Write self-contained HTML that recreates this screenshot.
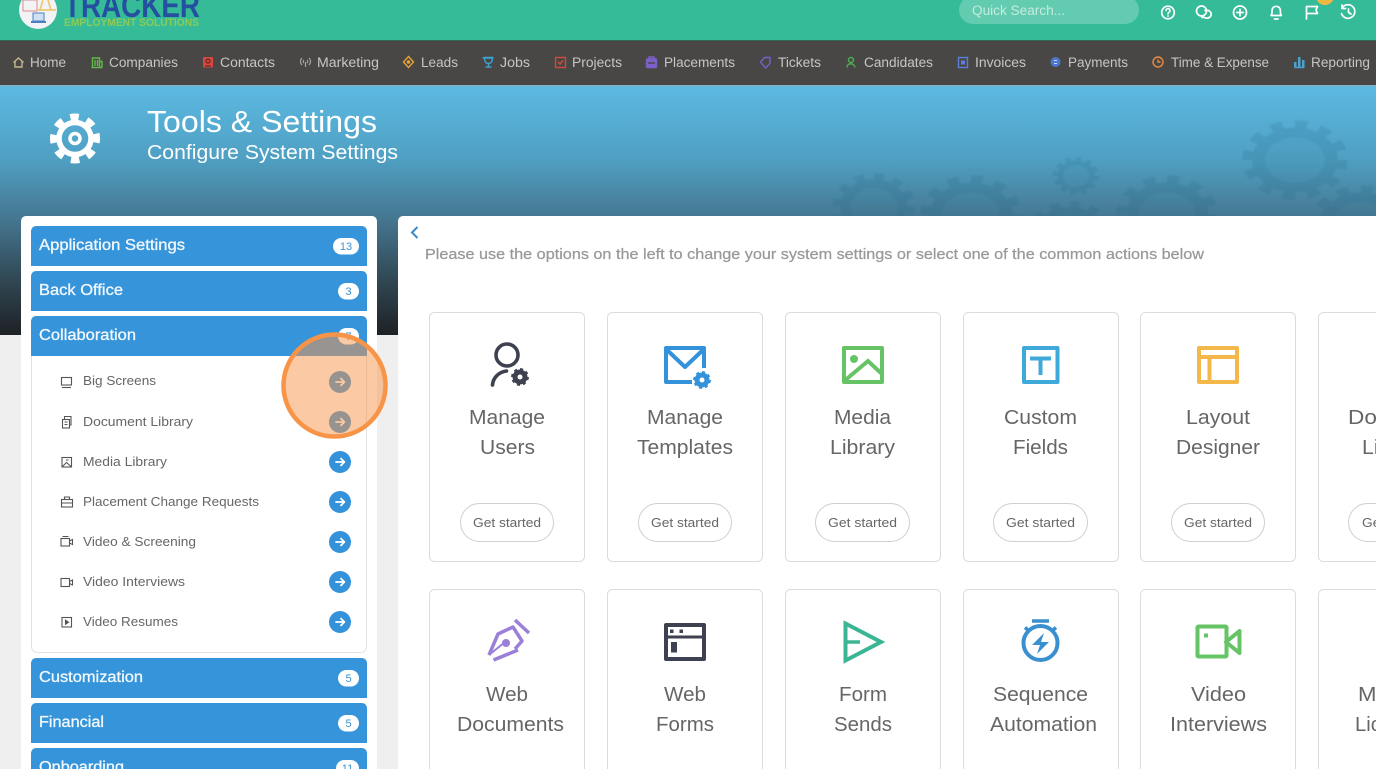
<!DOCTYPE html>
<html lang="en"><head><meta charset="utf-8"><title>Tools &amp; Settings</title>
<style>
html,body{margin:0;padding:0;width:1376px;height:769px;overflow:hidden;background:#efefef}
svg{display:block;position:absolute;left:0;top:0}
text{font-family:"Liberation Sans",sans-serif}
.nav{font-size:13.5px;fill:#c8c6c4}
.acc{font-size:15.5px;fill:#f2f8fd;stroke:#f2f8fd;stroke-width:.3}
.bd{font-size:11px;fill:#3f90cf;text-anchor:middle}
.li{font-size:13px;fill:#666}
.t{font-size:20.5px;fill:#666}
.b{font-size:13px;fill:#666}
.ni{fill:none;stroke-width:1.4}
.w{fill:none;stroke:#fff;stroke-width:1.7;stroke-linecap:round;stroke-linejoin:round}
</style></head><body>
<svg width="1376" height="769" viewBox="0 0 1376 769" xmlns="http://www.w3.org/2000/svg">
<defs>
<linearGradient id="hg" x1="0" y1="0" x2="0" y2="1"><stop offset="0" stop-color="#5cbae2"/><stop offset=".3" stop-color="#4f9fc2"/><stop offset=".55" stop-color="#44748d"/><stop offset=".8" stop-color="#2f444f"/><stop offset="1" stop-color="#1e2125"/></linearGradient>
<g id="gr"><circle r="43" fill="none" stroke="#1f5f7e" stroke-width="10" pathLength="24" stroke-dasharray="1 1"/><circle r="33" fill="none" stroke="#1f5f7e" stroke-width="12"/><circle r="27" fill="#1f5f7e" fill-opacity=".35"/></g>
<g id="mg"><circle r="5" fill="none" stroke="currentColor" stroke-width="5"/><circle r="7.400" fill="none" stroke="currentColor" stroke-width="3" pathLength="16" stroke-dasharray="1 1"/></g>
<g id="ar"><path d="M-4 0H4M1 -3.400L4.400 0L1 3.400" fill="none" stroke="#fff" stroke-width="1.800" stroke-linecap="round" stroke-linejoin="round"/></g>
<filter id="bl"><feGaussianBlur stdDeviation=".8"/></filter>
</defs>

<rect width="1376" height="769" fill="#efefef"/>
<!-- top bar -->
<rect width="1376" height="40" fill="#36bb99"/>
<circle cx="38" cy="10" r="19" fill="#f1f3f4"/>
<rect x="23" y="0" width="14" height="11" fill="none" stroke="#e08a90" stroke-width="1"/>
<path d="M40 10L43 0M48 0L51 10M38 10H56" stroke="#eec365" stroke-width="1.500" fill="none"/>
<rect x="33" y="13" width="11" height="8" fill="#cfe0f2" stroke="#4d7fc4"/>
<rect x="31" y="21" width="15" height="2" fill="#4d7fc4"/>
<text x="64" y="17" font-size="33" font-weight="700" fill="#24509f" textLength="136" lengthAdjust="spacingAndGlyphs">TRACKER</text>
<text x="64" y="26" font-size="11" font-weight="700" fill="#8ccb56" textLength="135" lengthAdjust="spacingAndGlyphs">EMPLOYMENT SOLUTIONS</text>
<rect x="959" y="-4" width="180" height="28" rx="14" fill="#63cbb0"/>
<text x="972" y="15" font-size="13.500" fill="#c6ece1" textLength="93" lengthAdjust="spacingAndGlyphs">Quick Search...</text>
<!-- header icons -->
<circle cx="1168" cy="12.500" r="6.300" class="w"/><path d="M1166 10.500a2 2 0 1 1 3 1.800c-.8.5-1 .8-1 1.500" class="w" stroke-width="1.400"/><circle cx="1168" cy="16" r=".9" fill="#fff"/>
<circle cx="1201.500" cy="11" r="5" class="w"/><path d="M1205 10.500a4.500 4 0 1 1 -1.500 6.500l-1.500.5" class="w"/>
<circle cx="1240" cy="12.500" r="6.500" class="w"/><path d="M1236.800 12.500h6.400M1240 9.300v6.400" class="w"/>
<path d="M1271 15.500c1.300-1.500 1-3 1-5a4.200 4.200 0 0 1 8.400 0c0 2-.3 3.500 1 5zM1274.500 19h3.500" class="w"/>
<path d="M1306.500 19V6.500h11l-1.500 3.500 1.500 3.500h-11" class="w"/>
<path d="M1342.500 7.500a6.800 6.800 0 1 1 -1 6M1342 5v3.500h3.500M1348.500 9v3.500l2.500 1.500" class="w"/>
<circle cx="1325" cy="-4" r="9" fill="#f2b73f"/>

<!-- nav -->
<rect y="40" width="1376" height="45" fill="#494745"/>
<rect y="40" width="1376" height="1" fill="#2d6a5a"/>
<g class="ni">
<path d="M13.500 62.500L18.500 58l5 4.500M15 61.500V67h7v-5.500" stroke="#c5b58d" fill="none"/>
<path d="M91.500 67.500h11M92.500 67V58h7v9M95 60v6M97.500 60v6M100 61.500h2V67" stroke="#62b84d" fill="none"/>
<rect x="203" y="57" width="10" height="10.500" rx="1" fill="#d9483e"/><circle cx="208" cy="61" r="2" fill="none" stroke="#6a2d28"/><path d="M205 66h6" stroke="#6a2d28"/>
<path d="M302 58c-2 2-2 5 0 7M309 58c2 2 2 5 0 7M304 60c-1 1-1 2 0 3M307 60c1 1 1 2 0 3M305.500 62v5" stroke="#aaa" stroke-width="1.100" fill="none"/>
<path d="M408.500 56.500l5 5.500-5 5.500-5-5.500z" fill="none" stroke="#e9a42f"/><circle cx="408.500" cy="62" r="1.800" fill="#e9a42f"/>
<path d="M484.500 57.500h8c0 4-1 6-4 6s-4-2-4-6zM482.500 58h11M485.500 67h6M488.500 63v4" stroke="#3fa3cf" fill="none"/>
<rect x="555.500" y="57.500" width="10" height="10" fill="none" stroke="#cc4b40"/><path d="M558 62l2 2 3-3.500" stroke="#cc4b40" fill="none"/>
<rect x="646.500" y="59" width="10" height="8.500" rx="1" fill="#7b60c8" stroke="#7b60c8"/><path d="M649 59v-2h5v2" stroke="#7b60c8" fill="none"/><path d="M648 63h7" stroke="#494745"/>
<path d="M760.500 62l4-4.500h5.500v6l-4.500 4.500z" fill="none" stroke="#7b60c8"/>
<circle cx="851" cy="60" r="2.500" fill="none" stroke="#4caf50"/><path d="M847 67.500c0-5 7-5 8 0" fill="none" stroke="#4caf50"/>
<rect x="958.500" y="57.500" width="9" height="10" fill="none" stroke="#5a7fd6"/><rect x="961" y="60.500" width="4" height="4" fill="#5a7fd6"/>
<circle cx="1055.500" cy="62" r="5" fill="#4a78d0"/><path d="M1054 60.500h3M1054 63.500h3" stroke="#cbd9f5" stroke-width="1"/>
<circle cx="1158" cy="62" r="5" fill="none" stroke="#e78a42"/><path d="M1158 59.500V62h2.500" fill="none" stroke="#e78a42"/>
<path d="M1294.500 67.500h10" stroke="#4aa3cf"/><rect x="1294" y="62" width="2.500" height="5" fill="#4aa3cf"/><rect x="1298" y="57" width="2.500" height="10" fill="#4aa3cf"/><rect x="1302" y="60" width="2.500" height="7" fill="#4aa3cf"/>
</g>
<text class="nav" x="30" y="67" textLength="36" lengthAdjust="spacingAndGlyphs">Home</text>
<text class="nav" x="109" y="67" textLength="69" lengthAdjust="spacingAndGlyphs">Companies</text>
<text class="nav" x="220" y="67" textLength="55" lengthAdjust="spacingAndGlyphs">Contacts</text>
<text class="nav" x="317" y="67" textLength="62" lengthAdjust="spacingAndGlyphs">Marketing</text>
<text class="nav" x="421" y="67" textLength="37" lengthAdjust="spacingAndGlyphs">Leads</text>
<text class="nav" x="500" y="67" textLength="30" lengthAdjust="spacingAndGlyphs">Jobs</text>
<text class="nav" x="572" y="67" textLength="50" lengthAdjust="spacingAndGlyphs">Projects</text>
<text class="nav" x="664" y="67" textLength="71" lengthAdjust="spacingAndGlyphs">Placements</text>
<text class="nav" x="778" y="67" textLength="43" lengthAdjust="spacingAndGlyphs">Tickets</text>
<text class="nav" x="864" y="67" textLength="69" lengthAdjust="spacingAndGlyphs">Candidates</text>
<text class="nav" x="975" y="67" textLength="51" lengthAdjust="spacingAndGlyphs">Invoices</text>
<text class="nav" x="1068" y="67" textLength="60" lengthAdjust="spacingAndGlyphs">Payments</text>
<text class="nav" x="1171" y="67" textLength="98" lengthAdjust="spacingAndGlyphs">Time &amp; Expense</text>
<text class="nav" x="1311" y="67" textLength="59" lengthAdjust="spacingAndGlyphs">Reporting</text>

<!-- hero -->
<rect y="85" width="1376" height="250" fill="url(#hg)"/>
<rect y="85" width="1376" height="1.500" fill="#7fb2cd"/>
<g opacity=".16" filter="url(#bl)">
<use href="#gr" transform="translate(874 207) scale(.86 .71)"/>
<use href="#gr" transform="translate(971 215) scale(1.060 .83)"/>
<use href="#gr" transform="translate(1076 176) scale(.48 .4)"/>
<use href="#gr" transform="translate(1070 234) scale(.9 .69)"/>
<use href="#gr" transform="translate(1167 215) scale(1.060 .83)"/>
<use href="#gr" transform="translate(1295 160) scale(1.100 .83)"/>
<use href="#gr" transform="translate(1262 250) scale(.92 .7)"/>
<use href="#gr" transform="translate(1361 225) scale(1.080 .83)"/>
</g>
<circle cx="75" cy="138.500" r="5" fill="none" stroke="#fff" stroke-width="3.500"/>
<circle cx="75" cy="138.500" r="16" fill="none" stroke="#fff" stroke-width="5.500"/>
<circle cx="75" cy="138.500" r="21" fill="none" stroke="#fff" stroke-width="8" pathLength="16" stroke-dasharray="1 1" stroke-dashoffset=".5"/>
<text x="147" y="132" font-size="31" fill="#fff" textLength="230" lengthAdjust="spacingAndGlyphs">Tools &amp; Settings</text>
<text x="147" y="159" font-size="20.500" fill="#fff" textLength="251" lengthAdjust="spacingAndGlyphs">Configure System Settings</text>

<!-- sidebar -->
<path d="M21 769V221a5 5 0 0 1 5-5H372a5 5 0 0 1 5 5V769z" fill="#fff"/>
<path d="M31 266V231a5 5 0 0 1 5-5H362a5 5 0 0 1 5 5V266z" fill="#3695da"/>
<path d="M31 311V276a5 5 0 0 1 5-5H362a5 5 0 0 1 5 5V311z" fill="#3695da"/>
<path d="M31 356V321a5 5 0 0 1 5-5H362a5 5 0 0 1 5 5V356z" fill="#3695da"/>
<path d="M31.500 356V646.500a6 6 0 0 0 6 6H360.500a6 6 0 0 0 6-6V356" fill="none" stroke="#e2e2e2"/>
<path d="M31 698V663a5 5 0 0 1 5-5H362a5 5 0 0 1 5 5V698z" fill="#3695da"/>
<path d="M31 743V708a5 5 0 0 1 5-5H362a5 5 0 0 1 5 5V743z" fill="#3695da"/>
<path d="M31 769V753a5 5 0 0 1 5-5H362a5 5 0 0 1 5 5V769z" fill="#3695da"/>
<text class="acc" x="39" y="250" textLength="146" lengthAdjust="spacingAndGlyphs">Application Settings</text>
<text class="acc" x="39" y="295" textLength="84" lengthAdjust="spacingAndGlyphs">Back Office</text>
<text class="acc" x="39" y="340" textLength="97" lengthAdjust="spacingAndGlyphs">Collaboration</text>
<text class="acc" x="39" y="682" textLength="104" lengthAdjust="spacingAndGlyphs">Customization</text>
<text class="acc" x="39" y="727" textLength="65" lengthAdjust="spacingAndGlyphs">Financial</text>
<text class="acc" x="39" y="772" textLength="85" lengthAdjust="spacingAndGlyphs">Onboarding</text>
<rect x="333" y="238" width="26" height="16.500" rx="8.250" fill="#fff"/><text class="bd" x="346" y="250">13</text>
<rect x="338" y="283" width="21" height="16.500" rx="8.250" fill="#fff"/><text class="bd" x="348.500" y="295">3</text>
<rect x="338" y="328" width="21" height="16.500" rx="8.250" fill="#fff"/><text class="bd" x="348.500" y="340">7</text>
<rect x="338" y="670" width="21" height="16.500" rx="8.250" fill="#fff"/><text class="bd" x="348.500" y="682">5</text>
<rect x="338" y="715" width="21" height="16.500" rx="8.250" fill="#fff"/><text class="bd" x="348.500" y="727">5</text>
<rect x="336" y="760" width="23" height="16.500" rx="8.250" fill="#fff"/><text class="bd" x="347.500" y="772">11</text>

<!-- list rows -->
<g fill="none" stroke="#555" stroke-width="1.100">
<rect x="61.500" y="377.500" width="10" height="7.500"/><path d="M62 387.500h9"/>
<rect x="62.500" y="419.500" width="7" height="8.500"/><path d="M64.500 419v-2.500h6.500v8.500h-1.500M64.500 422h3M64.500 424.500h3"/>
<rect x="62" y="457.500" width="9.500" height="9.500"/><path d="M62.500 466.500l4-4 4.500 4M66 460h2.500"/>
<rect x="61.500" y="499.500" width="11" height="7.500"/><path d="M64.500 499.500v-2.500h5v2.500M62 503h10"/>
<rect x="61" y="538.500" width="8.500" height="7.500"/><path d="M62.500 536.500h6M69.500 541l3-1.500v5l-3-1.500"/>
<rect x="61" y="578.500" width="8.500" height="8"/><path d="M69.500 581.500l3-1.500v5l-3-1.500"/>
<rect x="62" y="617.500" width="9.500" height="9.500"/><path d="M65.500 620.200v4l3-2z" fill="#555"/>
</g>
<text class="li" x="83" y="385" textLength="73" lengthAdjust="spacingAndGlyphs">Big Screens</text>
<text class="li" x="83" y="426" textLength="110" lengthAdjust="spacingAndGlyphs">Document Library</text>
<text class="li" x="83" y="466" textLength="84" lengthAdjust="spacingAndGlyphs">Media Library</text>
<text class="li" x="83" y="506" textLength="176" lengthAdjust="spacingAndGlyphs">Placement Change Requests</text>
<text class="li" x="83" y="546" textLength="113" lengthAdjust="spacingAndGlyphs">Video &amp; Screening</text>
<text class="li" x="83" y="586" textLength="102" lengthAdjust="spacingAndGlyphs">Video Interviews</text>
<text class="li" x="83" y="626" textLength="95" lengthAdjust="spacingAndGlyphs">Video Resumes</text>
<g fill="#3492da">
<circle cx="340" cy="382" r="11"/><circle cx="340" cy="422" r="11"/><circle cx="340" cy="462" r="11"/><circle cx="340" cy="502" r="11"/><circle cx="340" cy="542" r="11"/><circle cx="340" cy="582" r="11"/><circle cx="340" cy="622" r="11"/>
</g>
<use href="#ar" x="340" y="382"/><use href="#ar" x="340" y="422"/><use href="#ar" x="340" y="462"/><use href="#ar" x="340" y="502"/><use href="#ar" x="340" y="542"/><use href="#ar" x="340" y="582"/><use href="#ar" x="340" y="622"/>

<!-- main panel -->
<path d="M398 769V221a5 5 0 0 1 5-5H1376V769z" fill="#fff"/>
<path d="M417.500 227L412 232.500L417.500 238" fill="none" stroke="#3a8cc8" stroke-width="2"/>
<text x="425" y="259" font-size="15" fill="#999" stroke="#999" stroke-width=".25" textLength="779" lengthAdjust="spacingAndGlyphs">Please use the options on the left to change your system settings or select one of the common actions below</text>

<!-- cards -->
<g fill="#fff" stroke="#dcdcdc">
<rect x="429.500" y="312.500" width="155" height="249" rx="5"/><rect x="607.500" y="312.500" width="155" height="249" rx="5"/><rect x="785.500" y="312.500" width="155" height="249" rx="5"/><rect x="963.500" y="312.500" width="155" height="249" rx="5"/><rect x="1140.500" y="312.500" width="155" height="249" rx="5"/><rect x="1318.500" y="312.500" width="155" height="249" rx="5"/>
<path d="M429.500 769V594.500a5 5 0 0 1 5-5H579.500a5 5 0 0 1 5 5V769"/><path d="M607.500 769V594.500a5 5 0 0 1 5-5H757.500a5 5 0 0 1 5 5V769"/><path d="M785.500 769V594.500a5 5 0 0 1 5-5H935.500a5 5 0 0 1 5 5V769"/><path d="M963.500 769V594.500a5 5 0 0 1 5-5H1113.500a5 5 0 0 1 5 5V769"/><path d="M1140.500 769V594.500a5 5 0 0 1 5-5H1290.500a5 5 0 0 1 5 5V769"/><path d="M1318.500 769V594.500a5 5 0 0 1 5-5H1376"/>
</g>
<!-- card icons -->
<circle cx="507" cy="355" r="11" fill="none" stroke="#3d4150" stroke-width="3.600"/>
<path d="M492.500 385c.5-7 6-13 14-14" fill="none" stroke="#3d4150" stroke-width="3.600" stroke-linecap="round"/>
<use href="#mg" transform="translate(520 377)" color="#3d4150"/>
<path d="M704 368V348H666V382H692M666 349L685 367L704 349" fill="none" stroke="#3492da" stroke-width="4" stroke-linejoin="round"/>
<use href="#mg" transform="translate(702 380)" color="#3492da"/>
<rect x="844" y="348" width="38" height="34" fill="none" stroke="#66c466" stroke-width="4" stroke-linejoin="round"/>
<circle cx="854" cy="359" r="4" fill="#66c466"/>
<path d="M843 382L868 361L882 374" fill="none" stroke="#66c466" stroke-width="4"/>
<rect x="1024" y="348" width="33.500" height="34" fill="none" stroke="#3fa9d9" stroke-width="4" stroke-linejoin="round"/>
<path d="M1030 358.500H1051M1040.500 358.500V375" fill="none" stroke="#3fa9d9" stroke-width="4"/>
<rect x="1199" y="348" width="38" height="34" fill="none" stroke="#f4b84a" stroke-width="4" stroke-linejoin="round"/>
<path d="M1198 357H1238M1209.500 357V382" fill="none" stroke="#f4b84a" stroke-width="4"/>

<path d="M489 655L498 634L513 627L522 641L515 649" fill="none" stroke="#9b7fd9" stroke-width="3.500" stroke-linejoin="round"/>
<path d="M515 620L529 633M493.500 660L518 650" fill="none" stroke="#9b7fd9" stroke-width="3.500"/>
<path d="M489 655L505 642" stroke="#9b7fd9" stroke-width="2"/>
<circle cx="506" cy="643" r="4" fill="#9b7fd9"/>
<rect x="666" y="625" width="38" height="34" fill="none" stroke="#3d4150" stroke-width="4" stroke-linejoin="round"/>
<path d="M666 637H704" stroke="#3d4150" stroke-width="3"/>
<rect x="670" y="629.500" width="3.500" height="3.500" fill="#3d4150"/><rect x="679.500" y="629.500" width="3.500" height="3.500" fill="#3d4150"/><rect x="671" y="642" width="6" height="10.500" fill="#3d4150"/>
<path d="M845.500 623.500L881 642L845.500 660.500Z" fill="none" stroke="#3cb595" stroke-width="4"/>
<path d="M846 642H860" stroke="#3cb595" stroke-width="3.500"/>
<circle cx="1040.500" cy="643" r="17" fill="none" stroke="#3a8fd0" stroke-width="4"/>
<path d="M1032 621H1049M1025 627.500L1029 631M1056 627.500L1052 631" fill="none" stroke="#3a8fd0" stroke-width="3.500"/>
<path d="M1044 633L1032 645H1040L1037 654L1049 642H1041Z" fill="#3a8fd0"/>
<rect x="1197.500" y="626.500" width="29" height="30" rx="1" fill="none" stroke="#66c466" stroke-width="4"/>
<path d="M1239.500 631V653L1226 642Z" fill="none" stroke="#66c466" stroke-width="4" stroke-linejoin="round"/>
<rect x="1204" y="633.500" width="4" height="4" fill="#66c466"/>

<!-- card titles -->
<text class="t" x="469" y="424" textLength="76" lengthAdjust="spacingAndGlyphs">Manage</text><text class="t" x="480" y="454" textLength="55" lengthAdjust="spacingAndGlyphs">Users</text>
<text class="t" x="647" y="424" textLength="76" lengthAdjust="spacingAndGlyphs">Manage</text><text class="t" x="637" y="454" textLength="96" lengthAdjust="spacingAndGlyphs">Templates</text>
<text class="t" x="834" y="424" textLength="57" lengthAdjust="spacingAndGlyphs">Media</text><text class="t" x="830" y="454" textLength="65" lengthAdjust="spacingAndGlyphs">Library</text>
<text class="t" x="1004" y="424" textLength="73" lengthAdjust="spacingAndGlyphs">Custom</text><text class="t" x="1013" y="454" textLength="55" lengthAdjust="spacingAndGlyphs">Fields</text>
<text class="t" x="1186" y="424" textLength="64" lengthAdjust="spacingAndGlyphs">Layout</text><text class="t" x="1176" y="454" textLength="84" lengthAdjust="spacingAndGlyphs">Designer</text>
<text class="t" x="1348" y="424" textLength="103" lengthAdjust="spacingAndGlyphs">Document</text><text class="t" x="1362" y="454" textLength="65" lengthAdjust="spacingAndGlyphs">Library</text>
<text class="t" x="486" y="701" textLength="42" lengthAdjust="spacingAndGlyphs">Web</text><text class="t" x="457" y="731" textLength="107" lengthAdjust="spacingAndGlyphs">Documents</text>
<text class="t" x="664" y="701" textLength="42" lengthAdjust="spacingAndGlyphs">Web</text><text class="t" x="656" y="731" textLength="58" lengthAdjust="spacingAndGlyphs">Forms</text>
<text class="t" x="839" y="701" textLength="48" lengthAdjust="spacingAndGlyphs">Form</text><text class="t" x="834" y="731" textLength="58" lengthAdjust="spacingAndGlyphs">Sends</text>
<text class="t" x="993" y="701" textLength="95" lengthAdjust="spacingAndGlyphs">Sequence</text><text class="t" x="990" y="731" textLength="107" lengthAdjust="spacingAndGlyphs">Automation</text>
<text class="t" x="1191" y="701" textLength="55" lengthAdjust="spacingAndGlyphs">Video</text><text class="t" x="1170" y="731" textLength="97" lengthAdjust="spacingAndGlyphs">Interviews</text>
<text class="t" x="1358" y="701" textLength="80" lengthAdjust="spacingAndGlyphs">Manage</text><text class="t" x="1355" y="731" textLength="70" lengthAdjust="spacingAndGlyphs">License</text>

<!-- buttons -->
<g fill="#fff" stroke="#cfcfcf">
<rect x="460.500" y="503.500" width="93" height="38" rx="19"/><rect x="638.500" y="503.500" width="93" height="38" rx="19"/><rect x="815.500" y="503.500" width="94" height="38" rx="19"/><rect x="993.500" y="503.500" width="94" height="38" rx="19"/><rect x="1171.500" y="503.500" width="93" height="38" rx="19"/><rect x="1348.500" y="503.500" width="93" height="38" rx="19"/>
</g>
<text class="b" x="473" y="527" textLength="68" lengthAdjust="spacingAndGlyphs">Get started</text>
<text class="b" x="651" y="527" textLength="68" lengthAdjust="spacingAndGlyphs">Get started</text>
<text class="b" x="828" y="527" textLength="69" lengthAdjust="spacingAndGlyphs">Get started</text>
<text class="b" x="1006" y="527" textLength="69" lengthAdjust="spacingAndGlyphs">Get started</text>
<text class="b" x="1184" y="527" textLength="68" lengthAdjust="spacingAndGlyphs">Get started</text>
<text class="b" x="1362" y="527" textLength="68" lengthAdjust="spacingAndGlyphs">Get started</text>

<!-- highlight -->
<circle cx="334.500" cy="385.500" r="51" fill="#f89447" fill-opacity=".5" stroke="#f79447" stroke-width="4.500"/>
</svg>
</body></html>
